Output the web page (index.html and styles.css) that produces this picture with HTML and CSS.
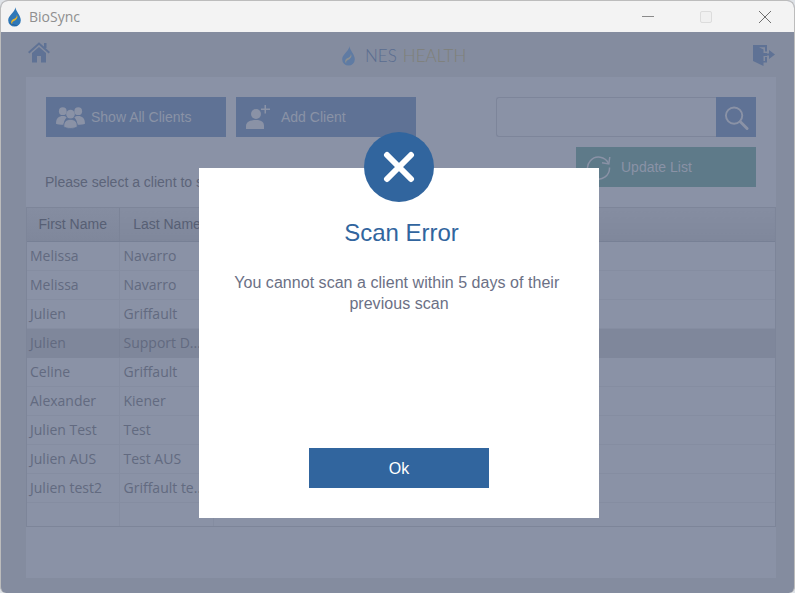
FILE: index.html
```html
<!DOCTYPE html>
<html lang="en">
<head>
<meta charset="utf-8">
<title>BioSync</title>
<link rel="stylesheet" href="styles.css">
</head>
<body>
<div class="window">
  <header class="titlebar">
    <svg class="app-icon" viewBox="0 0 14 21"><path fill="#2f78b8" d="M8 0C8.300 4.500 13.800 8.500 13.800 14A6.800 6.800 0 0 1 .2 14C.2 9 7 6 8 0Z"/><path fill="#1d4f86" d="M1.500 16C3 19 7 20.500 10.500 19C7.500 19.500 4 18.500 1.500 16Z"/><path fill="#e8b62c" d="M9.500 8C11.500 11.500 8.500 13.800 6 15C4.700 15.700 4 17 4.800 18.500C2.300 16.500 3.500 13.800 6 12.700C8 11.800 10 10.500 9.500 8Z"/></svg>
    <span class="app-name">BioSync</span>
    <div class="window-controls">
      <span class="ctl-min"></span>
      <span class="ctl-max"></span>
      <svg class="ctl-close" viewBox="0 0 14 14"><path d="M1 1L13 13M13 1L1 13" stroke="#6f6f6f" stroke-width="1" fill="none"/></svg>
    </div>
  </header>
  <main class="app">
    <div class="app-header">
      <svg class="home-icon" viewBox="0 0 22 21"><path fill="#5f7295" d="M4 11.500L11 5.500L18 11.500V21H13V14.500H9V21H4Z"/><path fill="none" stroke="#5f7295" stroke-width="2" d="M.7 11.300L11 2L21.300 11.300"/><rect x="16" y="1.500" width="2.500" height="5" fill="#5f7295"/></svg>
      <div class="logo">
        <svg class="logo-drop" viewBox="0 0 14 21"><path fill="#5f7ba3" d="M8 0C8.300 4.500 13.800 8.500 13.800 14A6.800 6.800 0 0 1 .2 14C.2 9 7 6 8 0Z"/><path fill="#8b8f92" d="M9.500 8C11.500 11.500 8.500 13.800 6 15C4.700 15.700 4 17 4.800 18.500C2.300 16.500 3.500 13.800 6 12.700C8 11.800 10 10.500 9.500 8Z"/></svg>
        <span class="logo-nes">NES</span>
        <span class="logo-health">HEALTH</span>
      </div>
      <svg class="logout-icon" viewBox="0 0 22 22"><path fill="#5f7295" d="M0 1H14V7.500H12V3.200H6L10.500 5.500V9H14V12H10.500V17H12V13H14V18.500H10.500V22L0 17Z"/><path fill="#5f7295" d="M11.500 9.500H16V6L22 10.500L16 15V11.500H11.500Z"/></svg>
    </div>
    <section class="panel">
      <div class="toolbar">
        <div class="toolbar-left">
          <div class="btn-row">
            <button class="btn">
              <svg class="btn-icon" viewBox="0 0 30 24"><g fill="#8a92a6"><circle cx="7" cy="6" r="4"/><circle cx="23" cy="6" r="4"/><path d="M0 19C0 13 3 11 7 11C9 11 10 11.500 11 12.500C9 14.500 8 17 8 20C4 20 1.500 20 0 19Z"/><path d="M30 19C30 13 27 11 23 11C21 11 20 11.500 19 12.500C21 14.500 22 17 22 20C26 20 28.500 20 30 19Z"/><circle cx="15" cy="9" r="4.500"/><path d="M8 22C8 16.500 10.500 14.500 15 14.500C19.500 14.500 22 16.500 22 22C19 24.500 11 24.500 8 22Z" stroke="#5f7295" stroke-width=".8"/></g></svg>
              <span>Show All Clients</span>
            </button>
            <button class="btn">
              <svg class="btn-icon add-icon" viewBox="0 0 26 24"><g fill="#8a92a6"><circle cx="10" cy="9" r="5"/><path d="M0 24V21C0 17 4 15 10 15C16 15 18 17.500 18 21V24Z"/><path d="M18.500 0H20V3.500H24V5H20V8.500H18.500V5H15V3.500H18.500Z"/></g></svg>
              <span>Add Client</span>
            </button>
          </div>
          <p class="hint">Please select a client to start a scan</p>
        </div>
        <div class="toolbar-right">
          <div class="search">
            <input class="search-input" type="text" aria-label="Search">
            <button class="search-btn" aria-label="Search">
              <svg viewBox="0 0 26 26"><circle cx="10.500" cy="10.500" r="8.500" fill="none" stroke="#8a92a6" stroke-width="2"/><path d="M17 17L24 24" stroke="#8a92a6" stroke-width="3" stroke-linecap="round"/></svg>
            </button>
          </div>
          <button class="btn btn-update">
            <svg class="btn-icon" viewBox="0 0 25 25"><path d="M22.500 8.500A11 11 0 1 0 23.500 12.500" fill="none" stroke="#8a92a6" stroke-width="1.500"/><path d="M23.800 2L22.800 9L16 7.800" fill="none" stroke="#8a92a6" stroke-width="1.500"/></svg>
            <span>Update List</span>
          </button>
        </div>
      </div>
      <div class="table-wrap">
        <table class="clients">
          <colgroup><col class="col-first"><col class="col-last"><col></colgroup>
          <thead><tr><th>First Name</th><th>Last Name</th><th></th></tr></thead>
          <tbody>
            <tr><td>Melissa</td><td>Navarro</td><td></td></tr>
            <tr><td>Melissa</td><td>Navarro</td><td></td></tr>
            <tr><td>Julien</td><td>Griffault</td><td></td></tr>
            <tr class="selected"><td>Julien</td><td>Support D...</td><td></td></tr>
            <tr><td>Celine</td><td>Griffault</td><td></td></tr>
            <tr><td>Alexander</td><td>Kiener</td><td></td></tr>
            <tr><td>Julien Test</td><td>Test</td><td></td></tr>
            <tr><td>Julien AUS</td><td>Test AUS</td><td></td></tr>
            <tr><td>Julien test2</td><td>Griffault te...</td><td></td></tr>
            <tr class="empty"><td></td><td></td><td></td></tr>
          </tbody>
        </table>
      </div>
    </section>
  </main>
  <div class="modal" role="dialog">
    <div class="modal-badge">
      <svg viewBox="0 0 32 32"><path d="M4 4L28 28M28 4L4 28" stroke="#fff" stroke-width="6" stroke-linecap="round" fill="none"/></svg>
    </div>
    <h1 class="modal-title">Scan Error</h1>
    <p class="modal-text">You cannot scan a client within 5 days of their&nbsp;<br>previous scan</p>
    <button class="modal-ok">Ok</button>
  </div>
</div>
</body>
</html>
```

FILE: styles.css
```css
* { box-sizing: border-box; }
html, body { margin: 0; padding: 0; height: 100%; background: #dfe3e8; overflow: hidden; }
body { font-family: "Liberation Sans", Arial, sans-serif; }

.window {
  position: relative;
  width: 795px;
  height: 593px;
  display: flex;
  flex-direction: column;
  border-radius: 8px 8px 6px 6px;
  border-top: 1px solid #bcbcbc;
  border-left: 1px solid #bcbcbc;
  border-right: 1px solid #bcbcbc;
  overflow: hidden;
  background: #848c9f;
}

.titlebar {
  height: 31px;
  flex: none;
  display: flex;
  align-items: center;
  background: #f3f3f3;
  padding-left: 7px;
}
.app-icon { width: 13px; height: 20px; }
.app-name {
  margin-left: 8px;
  font: 14px/20px "Open Sans", sans-serif;
  color: #8f8f8f;
}
.window-controls { margin-left: auto; display: flex; align-items: center; height: 100%; }
.ctl-min { width: 12px; height: 1px; background: #8a8a8a; margin-right: 46px; }
.ctl-max { width: 12px; height: 12px; border: 1px solid #dcdcdc; border-radius: 2px; background: #f0f0f0; margin-right: 46px; }
.ctl-close { width: 14px; height: 14px; margin-right: 22px; }

.app { flex: 1; display: flex; flex-direction: column; padding: 0 18px 15px 25px; min-height: 0; }
.app-header { height: 45px; flex: none; display: flex; justify-content: space-between; position: relative; }
.home-icon { width: 22px; height: 22px; margin-top: 9px; margin-left: 2px; }
.logout-icon { width: 22px; height: 22px; margin-top: 12px; margin-right: 1px; }
.logo { position: absolute; left: 316px; top: 14px; display: flex; align-items: center; height: 20px; }
.logo-drop { width: 13px; height: 20px; margin-right: 10px; }
.logo-nes { font: 300 17px/20px Lato, sans-serif; color: #5a6d90; margin-right: 6px; }
.logo-health { font: 300 17px/20px Lato, sans-serif; color: #7f8078; }

.panel { flex: 1; background: #8a92a6; padding-top: 20px; display: flex; flex-direction: column; min-height: 0; }
.toolbar { height: 90px; margin: 0 20px; display: flex; justify-content: space-between; flex: none; }
.toolbar-left { display: flex; flex-direction: column; justify-content: space-between; }
.btn-row { display: flex; gap: 10px; }
.btn {
  width: 180px;
  height: 40px;
  display: flex;
  align-items: center;
  background: #5f7295;
  border: 0;
  padding: 0 0 0 10px;
  color: #8a92a6;
  font: 14px/16px "Liberation Sans", Arial, sans-serif;
  text-align: left;
}
.btn-icon { width: 29px; height: 24px; margin-right: 6px; flex: none; }
.add-icon { width: 26px; height: 24px; margin-right: 9px; }
.hint { margin: 0 0 -3px -1px; font-size: 14px; line-height: 16px; color: #5c6479; }
.toolbar-right { width: 260px; display: flex; flex-direction: column; align-items: flex-end; gap: 10px; }
.search { display: flex; width: 260px; height: 40px; }
.search-input { flex: 1; min-width: 0; height: 40px; background: #8a92a6; border: 1px solid #7d859a; border-right: 0; border-radius: 3px 0 0 3px; padding: 0 6px; }
.search-btn { width: 40px; height: 40px; border: 0; padding: 8px 7px 6px 8px; background: #5f7295; }
.search-btn svg { display: block; width: 25px; height: 26px; }
.btn-update { background: #5e7a89; }
.btn-update .btn-icon { width: 25px; height: 25px; margin-right: 10px; }

.table-wrap { margin-top: 20px; flex: none; height: 320px; border: 1px solid #7d8599; overflow: hidden; }
.clients { width: 100%; border-collapse: collapse; table-layout: fixed; font: 14px/18px "Open Sans", sans-serif; color: #626a80; }
.col-first { width: 92px; }
.col-last { width: 94px; }
.clients th {
  height: 33px;
  padding: 0;
  font: 14px/18px "Liberation Sans", Arial, sans-serif;
  color: #575f74;
  background: linear-gradient(#858da1, #7f879b);
  border-right: 1px solid #7b8397;
  border-bottom: 1px solid #778095;
  text-align: center;
}
.clients th + th { padding-left: 2px; }
.clients th:last-child, .clients td:last-child { border-right: 0; }
.clients td {
  height: 29px;
  padding: 0 0 0 3px;
  border-right: 1px solid #858da1;
  border-bottom: 1px solid #858da1;
  white-space: nowrap;
  overflow: hidden;
}
.clients td + td { padding-left: 4px; }
.clients .selected td { background: #7f879b; border-color: #7f879b; border-right-color: #7b8397; }
.clients .empty td { border-bottom: 0; }

.modal {
  position: absolute;
  left: 198px;
  top: 167px;
  width: 400px;
  height: 350px;
  background: #fff;
  display: flex;
  flex-direction: column;
  align-items: center;
  padding-top: 51px;
}
.modal-badge {
  position: absolute;
  left: 165px;
  top: -36px;
  width: 70px;
  height: 70px;
  border-radius: 50%;
  background: #31659e;
  display: flex;
  align-items: center;
  justify-content: center;
}
.modal-badge svg { width: 32px; height: 32px; }
.modal-title { margin: 0; padding-left: 5px; font-size: 24px; line-height: 28px; font-weight: 400; color: #31659e; }
.modal-text { margin: 25px 0 0; width: 340px; font-size: 16px; line-height: 21px; letter-spacing: .04px; text-align: center; color: #6b7085; }
.modal-ok {
  margin-top: auto;
  margin-bottom: 30px;
  width: 180px;
  height: 40px;
  border: 0;
  padding: 2px 0 0;
  background: #31659e;
  color: #fff;
  font: 16px/20px "Liberation Sans", Arial, sans-serif;
}
```
